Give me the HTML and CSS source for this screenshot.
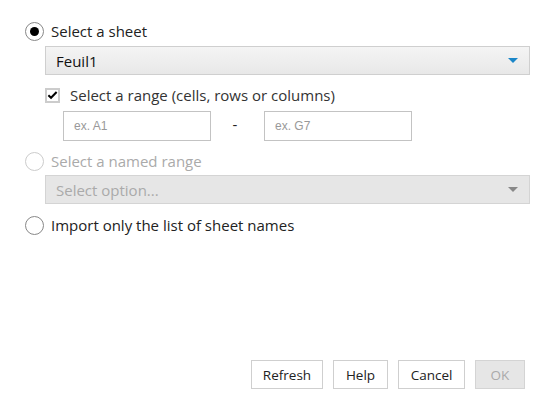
FILE: index.html
```
<!DOCTYPE html>
<html>
<head>
<meta charset="utf-8">
<link rel="stylesheet" href="styles.css">
</head>
<body>
<div class="dialog">
  <div class="options">
    <label class="radio-row">
      <span class="radio checked"></span>
      <span class="label">Select a sheet</span>
    </label>
    <div class="select select-active">
      <span class="select-text">Feuil1</span>
      <span class="arrow arrow-blue"></span>
    </div>
    <div class="range">
      <label class="check-row">
        <span class="checkbox">
          <svg width="12" height="10" viewBox="0 0 12 10"><path d="M1.5 5.2 L4.4 8 L10.5 1.8" fill="none" stroke="#000" stroke-width="2.2"/></svg>
        </span>
        <span class="label">Select a range (cells, rows or columns)</span>
      </label>
      <div class="range-inputs">
        <div class="input"><span class="placeholder">ex. A1</span></div>
        <span class="dash">-</span>
        <div class="input"><span class="placeholder">ex. G7</span></div>
      </div>
    </div>
    <label class="radio-row radio-row-2 disabled">
      <span class="radio radio-disabled"></span>
      <span class="label">Select a named range</span>
    </label>
    <div class="select select-disabled">
      <span class="select-text">Select option...</span>
      <span class="arrow arrow-grey"></span>
    </div>
    <label class="radio-row radio-row-3">
      <span class="radio"></span>
      <span class="label">Import only the list of sheet names</span>
    </label>
  </div>
  <div class="footer">
    <button class="btn btn-refresh">Refresh</button>
    <button class="btn btn-help">Help</button>
    <button class="btn btn-cancel">Cancel</button>
    <button class="btn btn-ok" disabled>OK</button>
  </div>
</div>
</body>
</html>
```
FILE: styles.css
```
* { box-sizing: border-box; }
html, body { margin: 0; padding: 0; background: #fff; }
.dialog {
  width: 550px;
  height: 400px;
  display: flex;
  flex-direction: column;
  padding: 21px 20px 11px 25px;
  font-family: "Open Sans", "Noto Sans", sans-serif;
  font-size: 15px;
  color: #222;
}
.options { display: flex; flex-direction: column; }
.radio-row {
  display: flex;
  align-items: center;
  height: 20px;
  gap: 7px;
}
.radio {
  width: 19px;
  height: 19px;
  border: 1.5px solid #888;
  border-radius: 50%;
  display: flex;
  align-items: center;
  justify-content: center;
  flex: none;
  background: #fff;
}
.radio.checked::after {
  content: "";
  width: 9px;
  height: 9px;
  border-radius: 50%;
  background: #000;
}
.radio-disabled { border-color: #ccc; }
.disabled .label { color: #aaa; }
.select {
  margin-left: 20px;
  height: 29px;
  border: 1px solid #cfcfcf;
  display: flex;
  align-items: center;
  justify-content: space-between;
  padding: 0 11px 0 10px;
}
.select-active {
  margin-top: 5px;
  background: linear-gradient(#f4f4f4, #e8e8e8);
}
.select-active .select-text { color: #111; }
.select-disabled {
  margin-top: 4px;
  background: #e6e6e6;
  border-color: #d4d4d4;
}
.select-disabled .select-text { color: #aaa; }
.arrow {
  width: 0;
  height: 0;
  border-left: 5px solid transparent;
  border-right: 5px solid transparent;
  border-top: 5px solid #1a86c8;
}
.arrow-grey { border-top-color: #888; }
.range { margin-left: 20px; margin-top: 12px; }
.check-row {
  display: flex;
  align-items: center;
  gap: 10px;
  height: 16px;
}
.checkbox {
  width: 15px;
  height: 15px;
  border: 2px solid #ccc;
  display: flex;
  align-items: center;
  justify-content: center;
  flex: none;
  background: #fff;
}
.check-row .label { color: #333; }
.range-inputs {
  display: flex;
  align-items: center;
  margin-top: 8px;
  margin-left: 18px;
}
.input {
  width: 148px;
  height: 30px;
  border: 1px solid #c3c3c3;
  display: flex;
  align-items: center;
  padding-left: 10px;
}
.placeholder {
  font-family: "Liberation Sans", Arial, sans-serif;
  font-size: 12px;
  color: #999;
}
.dash {
  width: 53px;
  padding-right: 5px;
  text-align: center;
  color: #222;
  position: relative;
  top: -2px;
}
.radio-row-2 { margin-top: 10px; }
.radio-row-3 { margin-top: 11px; }
.radio-row-3 .label { color: #222; }
.footer {
  margin-top: auto;
  display: flex;
  justify-content: flex-end;
  gap: 10px;
  padding-right: 5px;
}
.btn {
  height: 29px;
  border: 1px solid #cfcfcf;
  background: #fff;
  font-family: "Open Sans", "Noto Sans", sans-serif;
  font-size: 13.5px;
  color: #222;
  padding: 0;
}
.btn-refresh { width: 72px; }
.btn-help { width: 55px; }
.btn-cancel { width: 67px; }
.btn-ok { width: 50px; background: #e6e6e6; color: #aaa; border-color: #d4d4d4; }
```
